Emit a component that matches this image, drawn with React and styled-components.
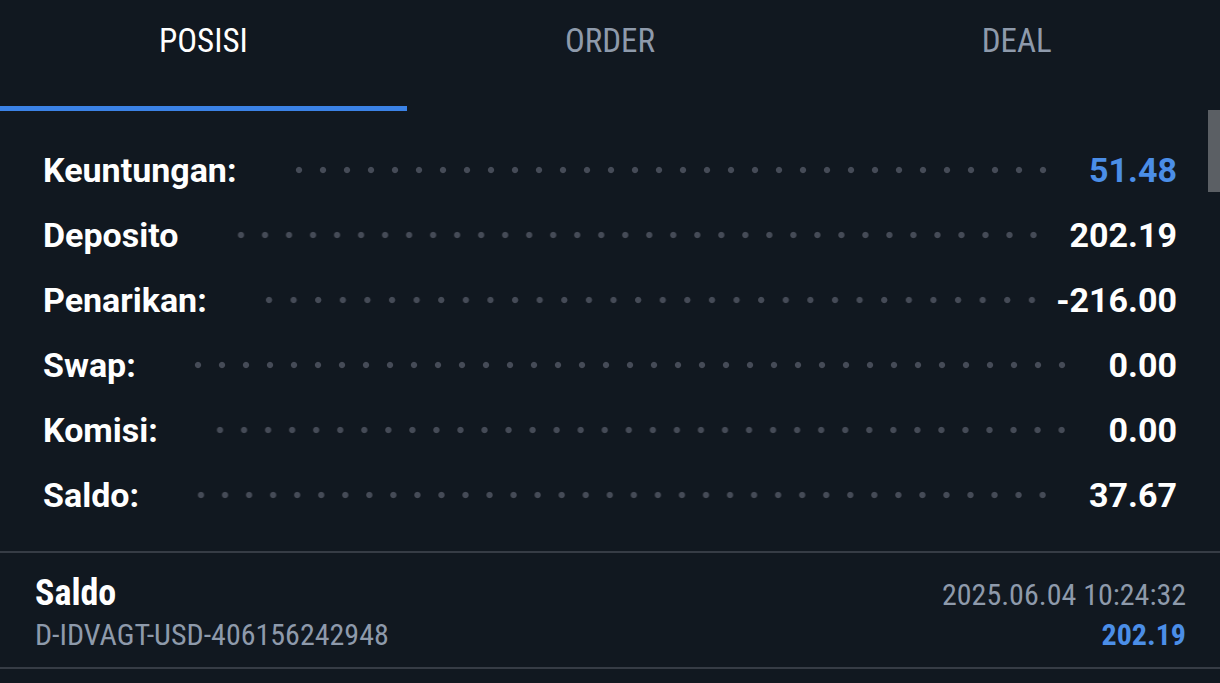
import React from 'react';
import styled, { createGlobalStyle } from 'styled-components';

const GlobalStyle = createGlobalStyle`
  html, body {
    margin: 0;
    padding: 0;
    background: #111820;
  }
  body {
    font-family: Roboto, "Noto Sans", sans-serif;
    color: #ffffff;
    overflow: hidden;
  }
`;

const condensed = `"Roboto Condensed", "Liberation Sans Narrow", "Arial Narrow", Roboto, sans-serif`;

const Screen = styled.div`
  width: 1220px;
  height: 683px;
  background: #111820;
  position: relative;
  overflow: hidden;
`;

const Tabs = styled.div`
  display: grid;
  grid-template-columns: repeat(3, 1fr);
  height: 111px;
`;

const Tab = styled.div`
  display: flex;
  align-items: flex-start;
  justify-content: center;
  padding-top: 21px;
  box-sizing: border-box;
  font-family: ${condensed};
  font-size: 33px;
  color: ${(p) => (p.$active ? '#ffffff' : '#8e9aab')};
  border-bottom: 5px solid ${(p) => (p.$active ? '#3b82e6' : 'transparent')};
`;

const Summary = styled.div`
  padding: 26px 43px 24px 43px;
`;

const Row = styled.div`
  display: flex;
  align-items: center;
  height: 65px;
  font-size: 34px;
  font-weight: 700;
`;

const Label = styled.span`
  flex: none;
`;

// dotted leader between a label and its value
const Leader = styled.span`
  flex: 1;
  height: 8px;
  margin: 0 ${(p) => p.$right}px 0 50px;
  background-image: radial-gradient(circle, #454b57 2.6px, #2c313a 3.1px, transparent 3.6px);
  background-size: 24px 8px;
  background-repeat: space no-repeat;
`;

const Value = styled.span`
  flex: none;
  color: ${(p) => (p.$blue ? '#4b8ee7' : '#ffffff')};
`;

const Scrollbar = styled.div`
  position: absolute;
  right: 0;
  top: 110px;
  width: 12px;
  height: 82px;
  background: #5b5f64;
`;

const Divider = styled.div`
  height: 2px;
  background: #363c45;
`;

const Deal = styled.div`
  display: flex;
  justify-content: space-between;
  align-items: flex-start;
  height: 114px;
  padding: 0 34px 0 35px;
  box-sizing: border-box;
  font-family: ${condensed};
`;

const DealCol = styled.div`
  display: flex;
  flex-direction: column;
  align-items: ${(p) => (p.$right ? 'flex-end' : 'flex-start')};
  padding-top: ${(p) => (p.$right ? '24px' : '19px')};
`;

const DealTitle = styled.div`
  font-size: 36px;
  font-weight: 700;
  line-height: 42px;
  color: #ffffff;
`;

const DealSub = styled.div`
  font-size: 30px;
  line-height: 36px;
  margin-top: ${(p) => p.$mt || 0}px;
  color: ${(p) => (p.$blue ? '#4b8ee7' : '#8e9aab')};
  font-weight: ${(p) => (p.$blue ? 700 : 400)};
`;

const rows = [
  { label: 'Keuntungan:', value: '51.48', blue: true, right: 34 },
  { label: 'Deposito', value: '202.19', right: 24 },
  { label: 'Penarikan:', value: '-216.00', right: 12 },
  { label: 'Swap:', value: '0.00', right: 35 },
  { label: 'Komisi:', value: '0.00', right: 35 },
  { label: 'Saldo:', value: '37.67', right: 34 },
];

export default function App() {
  return (
    <Screen>
      <GlobalStyle />
      <Tabs>
        <Tab $active>POSISI</Tab>
        <Tab>ORDER</Tab>
        <Tab>DEAL</Tab>
      </Tabs>
      <Summary>
        {rows.map((r) => (
          <Row key={r.label}>
            <Label>{r.label}</Label>
            <Leader $right={r.right} />
            <Value $blue={r.blue}>{r.value}</Value>
          </Row>
        ))}
      </Summary>
      <Scrollbar />
      <Divider />
      <Deal>
        <DealCol>
          <DealTitle>Saldo</DealTitle>
          <DealSub $mt={3}>D-IDVAGT-USD-406156242948</DealSub>
        </DealCol>
        <DealCol $right>
          <DealSub>2025.06.04 10:24:32</DealSub>
          <DealSub $blue $mt={4}>202.19</DealSub>
        </DealCol>
      </Deal>
      <Divider />
    </Screen>
  );
}
